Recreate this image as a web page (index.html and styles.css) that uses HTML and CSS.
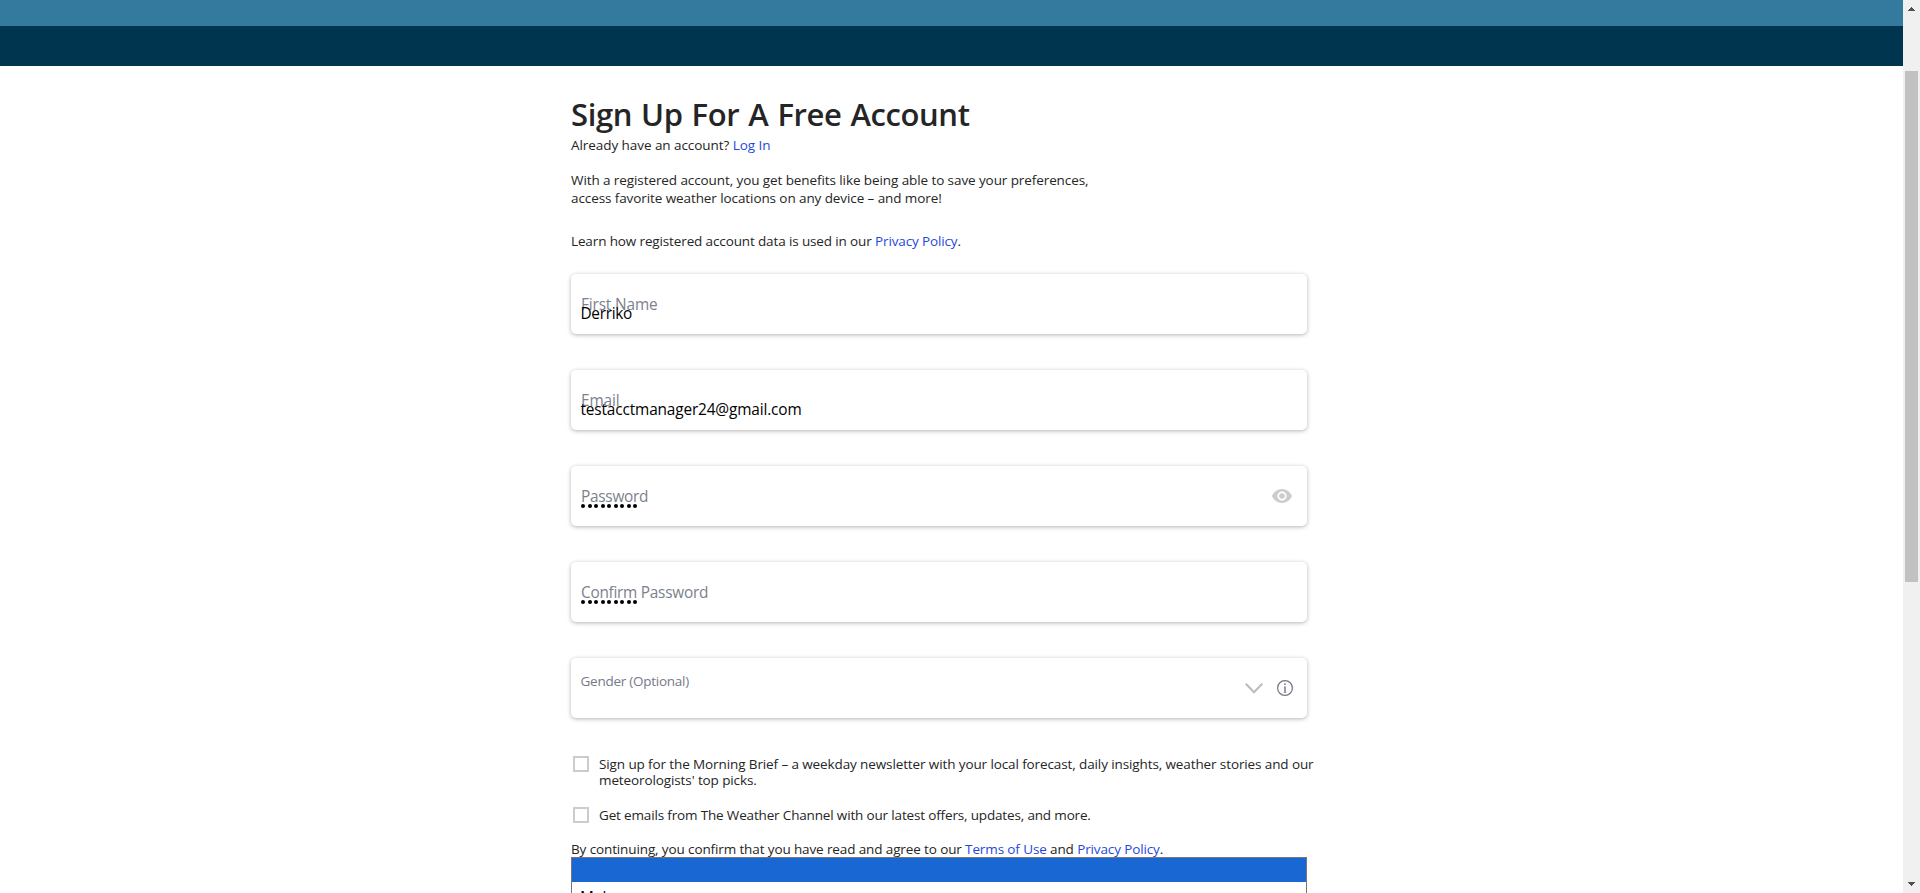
FILE: index.html
```html
<!DOCTYPE html>
<html lang="en">
<head>
<meta charset="utf-8">
<title>Sign Up</title>
<link rel="stylesheet" href="styles.css">
</head>
<body>
<div class="window">
  <div class="page">
    <header class="topbar"></header>
    <nav class="navbar"></nav>
    <main class="content">
      <h1 class="title">Sign Up For A Free Account</h1>
      <p class="login">Already have an account? <a class="link" href="#">Log In</a></p>
      <p class="intro">With a registered account, you get benefits like being able to save your preferences,<br>access favorite weather locations on any device – and more!</p>
      <p class="learn">Learn how registered account data is used in our <a class="link" href="#">Privacy Policy</a>.</p>
      <div class="fields">
        <div class="card"><label class="label">First Name</label><span class="value name">Derriko</span></div>
        <div class="card"><label class="label">Email</label><span class="value">testacctmanager24@gmail.com</span></div>
        <div class="card"><label class="label tight">Password</label>
          <span class="dots"><i></i><i></i><i></i><i></i><i></i><i></i><i></i><i></i><i></i></span>
          <svg class="eye" width="20" height="14" viewBox="0 0 20 14"><path fill="#ccc" fill-rule="evenodd" d="M10 0C5.500 0 1.700 2.900 0 7c1.700 4.100 5.500 7 10 7s8.300-2.900 10-7c-1.700-4.100-5.500-7-10-7zm0 11.600a4.600 4.600 0 1 1 0-9.200 4.600 4.600 0 0 1 0 9.200zm0-7.400a2.800 2.800 0 1 0 0 5.600 2.800 2.800 0 0 0 0-5.600z"/></svg>
        </div>
        <div class="card"><label class="label tight">Confirm Password</label>
          <span class="dots"><i></i><i></i><i></i><i></i><i></i><i></i><i></i><i></i><i></i></span>
        </div>
        <div class="card"><label class="small">Gender (Optional)</label>
          <svg class="chevron" width="18" height="11" viewBox="0 0 18 11"><path fill="none" stroke="#bdbdbd" stroke-width="2.200" d="M.7.700 9 9.200 17.300.7"/></svg>
          <svg class="info" width="16" height="16" viewBox="0 0 16 16"><circle cx="8" cy="8" r="7.400" fill="none" stroke="#6f7585" stroke-width="1.200"/><path fill="#6f7585" d="M7.200 3.500h1.500V5H7.200zM7 6.500h1.700v5.500h.6v.8H6.700V12h.6V7.300H7z"/></svg>
        </div>
      </div>
      <div class="check"><span class="box"></span><p class="text">Sign up for the Morning Brief – a weekday newsletter with your local forecast, daily insights, weather stories and our<br>meteorologists' top picks.</p></div>
      <div class="check offers"><span class="box"></span><p class="text">Get emails from The Weather Channel with our latest offers, updates, and more.</p></div>
      <p class="terms">By continuing, you confirm that you have read and agree to our <a class="link" href="#">Terms of Use</a> and <a class="link" href="#">Privacy Policy</a>.</p>
      <div class="menu"><div class="option selected"></div><div class="option">Male</div></div>
    </main>
  </div>
  <aside class="scrollbar">
    <svg class="arrow" width="7" height="4" viewBox="0 0 7 4" shape-rendering="crispEdges"><path fill="#505050" d="M3 0h1v1h1v1h1v1h1v1H0V3h1V2h1V1h1z"/></svg>
    <span class="thumb"></span>
    <svg class="arrow down" width="7" height="4" viewBox="0 0 7 4" shape-rendering="crispEdges"><path fill="#505050" d="M0 0h7v1H6v1H5v1H4v1H3V3H2V2H1V1H0z"/></svg>
  </aside>
</div>
</body>
</html>
```
FILE: styles.css
```css
* { box-sizing: border-box; }
body { margin: 0; font-family: "Open Sans", "Noto Sans", sans-serif; font-size: 13.5px; color: #252525; background: #fff; }
p, h1 { margin: 0; }
.window { display: flex; height: 893px; overflow: hidden; }
.page { flex: 1; }
.topbar { height: 26px; background: #347a9e; }
.navbar { height: 40px; background: #003550; }
.content { width: 760px; margin-left: 571px; padding-top: 28px; line-height: 18px; }
.title { height: 42px; font-size: 31px; font-weight: 600; line-height: 40px; letter-spacing: -0.4px; word-spacing: 1.4px; white-space: nowrap; }
.intro, .learn, .login, .text, .terms { white-space: nowrap; }
.login { letter-spacing: -0.06px; }
.intro { margin-top: 17px; letter-spacing: -0.09px; }
.learn { margin-top: 25px; letter-spacing: -0.13px; }
.link { color: #1f48e0; text-decoration: none; }
.fields { display: flex; flex-direction: column; gap: 36px; width: 736px; margin-top: 24px; }
.card { position: relative; height: 60px; border-radius: 5px; background: #fff; box-shadow: 0 1px 4px rgba(0, 0, 0, .3); font-size: 15.4px; line-height: 20px; letter-spacing: -0.15px; }
.label { position: absolute; left: 10px; top: 21px; color: #7c818d; }
.tight { letter-spacing: -0.27px; }
.value { position: absolute; left: 9.500px; top: 30px; color: #000; }
.name { letter-spacing: -0.3px; }
.small { position: absolute; left: 9.500px; top: 13px; font-size: 13.5px; letter-spacing: -0.26px; color: #757a87; }
.dots { position: absolute; left: 10px; top: 38px; display: flex; gap: 2.5px; }
.dots i { width: 4px; height: 4px; border-radius: 50%; background: #000; }
.eye { position: absolute; right: 15px; top: 23px; }
.chevron { position: absolute; right: 44px; top: 25px; }
.info { position: absolute; right: 14px; top: 22px; }
.check { display: flex; gap: 10px; padding-left: 2px; margin-top: 38px; line-height: 16px; letter-spacing: -0.11px; }
.offers { margin-top: 19px; letter-spacing: -0.16px; }
.box { flex: none; width: 16px; height: 16px; border: 2px solid #ccc; }
.terms { height: 17px; margin-top: 17px; letter-spacing: -0.12px; }
.menu { position: relative; width: 736px; height: 60px; border: 1px solid #767676; background: #fff; font-size: 15.4px; }
.option { height: 24px; padding: 7px 8px; color: #000; }
.selected { background: #1967d2; }
.scrollbar { display: flex; flex-direction: column; align-items: center; width: 17px; height: 893px; padding: 7px 0; background: #f0f0f0; }
.thumb { width: 13px; height: 511px; margin-top: 60px; background: #c1c1c1; }
.down { margin-top: auto; }
```
